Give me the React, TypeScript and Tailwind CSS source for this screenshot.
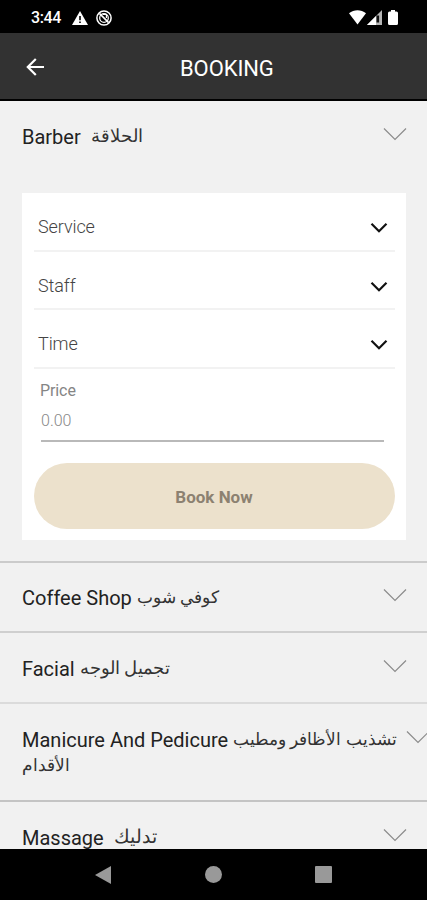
import { useState } from "react";

const categories = [
  { id: "coffee", en: "Coffee Shop", ar: "كوفي شوب", row: "h-[70px] border-[#cfcfcf] pt-[22px]", arStyle: "ml-[5px] text-[17px]" },
  { id: "facial", en: "Facial", ar: "تجميل الوجه", row: "h-[71px] border-[#dbdbdb] pt-[23px]", arStyle: "ml-[5px] text-[18px]" },
  { id: "nails", en: "Manicure And Pedicure", ar: "تشذيب الأظافر ومطيب", arMore: "الأقدام", row: "h-[98px] border-[#c4c4c4] pt-[23px]", arStyle: "ml-[5px] text-[17.3px]" },
  { id: "massage", en: "Massage", ar: "تدليك", row: "h-[70px] border-[#c4c4c4] pt-[23px]", arStyle: "ml-[10px] text-[19px]" },
];

const fields = ["Service", "Staff", "Time"];

const ThinChevron = () => (
  <svg className="mt-[3px] h-[14px] w-[24px] shrink-0" viewBox="0 0 24 14" fill="none" stroke="#8c8c8c" strokeWidth="1.2">
    <path d="M1 1.5 12 12.5 23 1.5" />
  </svg>
);

const SelectChevron = () => (
  <svg className="mt-[2px] h-[12px] w-[18px]" viewBox="0 0 18 12" fill="none" stroke="#111" strokeWidth="2.2">
    <path d="M1.5 1.7 9 9.2 16.5 1.7" />
  </svg>
);

const StatusBar = () => (
  <div className="flex h-[33px] shrink-0 items-center bg-black pl-[31px] pr-[29px] pt-[2px] text-white">
    <span className="w-[41px] text-[16px] font-medium leading-none tracking-[-0.4px]">3:44</span>
    <svg className="h-[14px] w-[16px]" viewBox="0 0 16 14">
      <path d="M8 0 16 14H0Z" fill="#fff" />
      <path d="M7.2 5h1.6v4.2H7.2zM7.2 10.4h1.6V12H7.2z" fill="#000" />
    </svg>
    <svg className="ml-[8px] h-[16px] w-[16px]" viewBox="0 0 16 16" fill="none" stroke="#fff">
      <circle cx="8" cy="8" r="7.1" strokeWidth="1.5" />
      <circle cx="8" cy="8" r="4.3" strokeWidth="1.3" />
      <path d="M3.4 3.4 12.6 12.6" strokeWidth="1.6" />
      <path d="M6.7 4.5h3.7v3.6" strokeWidth="1.2" />
    </svg>
    <svg className="ml-auto h-[15px] w-[17px]" viewBox="0 0 17 15">
      <path d="M0 3.3C5 -.8 12 -.8 17 3.3L8.5 14.5Z" fill="#fff" />
    </svg>
    <svg className="ml-[1px] h-[15px] w-[15px]" viewBox="0 0 15 15">
      <path d="M15 0V15H0Z" fill="#b5b5b5" />
      <path d="M9 6V15H0Z" fill="#fff" />
      <path d="M9.5 5.5h2.6v7H9.5z" fill="#111" />
    </svg>
    <svg className="ml-[6px] h-[15px] w-[10px]" viewBox="0 0 10 15">
      <path d="M3 0h4v1.5h1.5Q10 1.5 10 3v10.5Q10 15 8.5 15h-7Q0 15 0 13.5V3Q0 1.5 1.5 1.5H3Z" fill="#fff" />
    </svg>
  </div>
);

const BookingForm = () => {
  const [price, setPrice] = useState("");

  return (
    <div className="mx-[22px] h-[347px] w-[384px] bg-white pl-[12px] pr-[11px]">
      {fields.map((field, index) => (
        <button
          key={field}
          className={`flex w-full items-center justify-between border-b-2 border-[#f2f2f2] pl-[4px] pr-[7px] pt-[11px] text-left ${index === 1 ? "h-[58px]" : "h-[59px]"}`}
        >
          <span className="text-[18px] font-light leading-none tracking-[-0.1px] text-[#444]">{field}</span>
          <SelectChevron />
        </button>
      ))}
      <label className="ml-[7px] mr-[11px] mt-[12px] block border-b-2 border-[#b9b9b9] pb-[10px]">
        <span className="-ml-px block text-[16px] leading-[19px] tracking-[-0.1px] text-[#858585]">Price</span>
        <input
          className="mt-[11px] block h-[19px] w-full bg-transparent text-[16px] font-light text-[#777] outline-none placeholder:text-[#888]"
          placeholder="0.00"
          value={price}
          onChange={(e) => setPrice(e.target.value)}
        />
      </label>
      <button className="mt-[21px] block h-[66px] w-[361px] rounded-full bg-[#ece1cc] pr-px pt-px text-[17px] font-bold text-[#8c8171]">
        Book Now
      </button>
    </div>
  );
};

export default function App() {
  return (
    <div className="flex h-[900px] w-[427px] flex-col overflow-hidden bg-[#f1f1f1] font-['Roboto','DejaVu_Sans',sans-serif]">
      <StatusBar />

      {/* Header */}
      <header className="flex h-[68px] shrink-0 items-center border-b-2 border-black bg-[#323232] text-white">
        <svg className="ml-[26px] mt-[2px] h-[18px] w-[19px]" viewBox="0 0 19 18" fill="none" stroke="#fff" strokeWidth="2.2">
          <path d="M18 9H2M9.8 1 1.8 9l8 8" />
        </svg>
        <h1 className="ml-[135px] mt-[5px] text-[22px] leading-none tracking-[-0.1px]">BOOKING</h1>
      </header>

      <main className="h-[748px] shrink-0 overflow-hidden text-[20px] leading-[26px] text-[#222]">
        <section className="h-[462px] border-b-2 border-[#cbcbcb]">
          <div className="flex items-start justify-between pl-[22px] pr-[20px] pt-[23px]">
            <div className="whitespace-nowrap">
              Barber
              <span className="relative top-[-2px] ml-[10px] text-[18px] font-light leading-none text-[#333]">الحلاقة</span>
            </div>
            <ThinChevron />
          </div>
          <div className="mt-[43px]">
            <BookingForm />
          </div>
        </section>

        {categories.map((item) => (
          <section key={item.id} className={`flex items-start border-b-2 pl-[22px] ${item.row}`}>
            <div className={`shrink-0 whitespace-nowrap ${item.arMore ? "w-[384px]" : "w-[361px]"}`}>
              {item.en}
              <span className={`relative top-[-2px] font-light leading-none text-[#333] ${item.arStyle}`}>{item.ar}</span>
              {item.arMore && (
                <div className="-mt-px text-[17.3px] font-light text-[#333]">{item.arMore}</div>
              )}
            </div>
            <ThinChevron />
          </section>
        ))}
      </main>

      {/* System navigation */}
      <nav className="flex h-[51px] shrink-0 items-center justify-between bg-black pl-[95px] pr-[95px]">
        <svg className="h-[20px] w-[16px]" viewBox="0 0 16 20">
          <path d="M0 10 16 1v18Z" fill="#999" />
        </svg>
        <div className="h-[17px] w-[17px] rounded-full bg-[#999]" />
        <div className="h-[17px] w-[17px] rounded-[1px] bg-[#999]" />
      </nav>
    </div>
  );
}
